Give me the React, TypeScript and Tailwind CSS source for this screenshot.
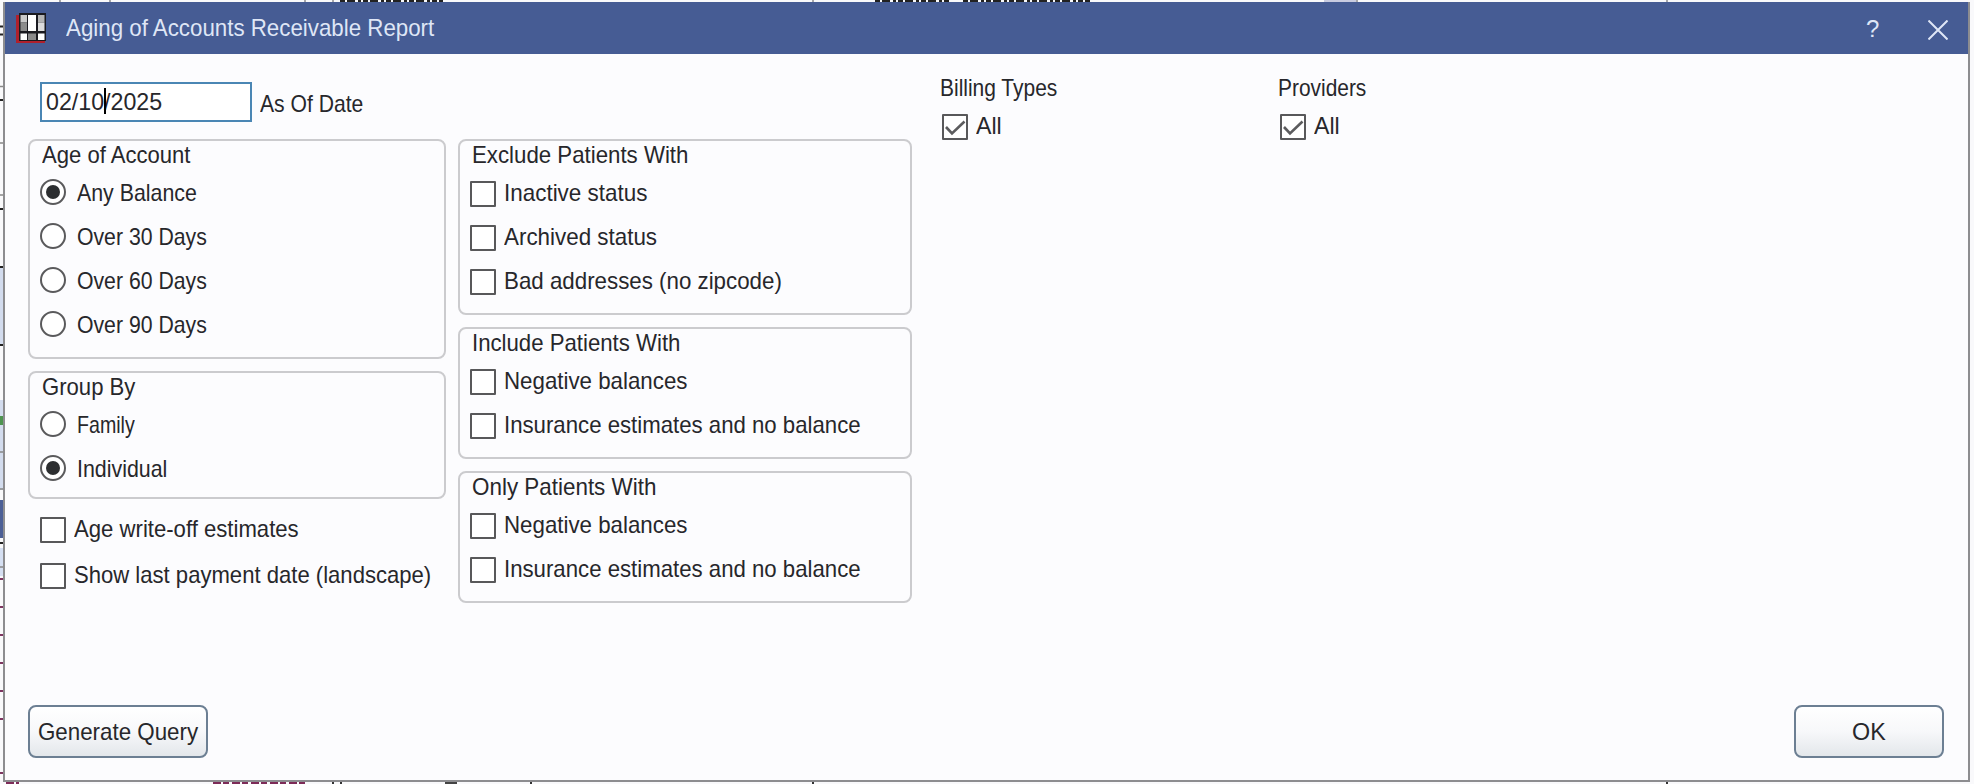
import { useLayoutEffect, useRef, type ReactNode } from "react";

function Label({ text, width, className = "" }: { text: string; width: number; className?: string }) {
  const inner = useRef<HTMLSpanElement>(null);
  useLayoutEffect(() => {
    const el = inner.current;
    if (el) el.style.transform = `scaleX(${width / el.offsetWidth})`;
  }, [text, width]);
  return (
    <span className={`block h-7 shrink-0 whitespace-nowrap ${className}`} style={{ width }}>
      <span ref={inner} className="inline-block origin-left">{text}</span>
    </span>
  );
}

function Radio({ text, width, checked = false }: { text: string; width: number; checked?: boolean }) {
  return (
    <label className="flex h-7 items-center">
      <span className="flex size-[26px] shrink-0 items-center justify-center rounded-full border-2 border-[#5a5a5c] bg-white">
        {checked && <span className="size-3.5 rounded-full bg-[#2c2e30]" />}
      </span>
      <Label text={text} width={width} className="mt-px ml-[11px]" />
    </label>
  );
}

function Check({ text, width, checked = false }: { text: string; width: number; checked?: boolean }) {
  return (
    <label className="flex h-[26px] items-center">
      <span className="flex size-[26px] shrink-0 items-center justify-center rounded-[1px] border-2 border-[#58585a] bg-white">
        {checked && (
          <svg viewBox="0 0 22 22" className="size-[22px]" fill="none" stroke="#5c5c5e" strokeWidth="2.6">
            <path d="M2 11 L8 17.5 L20.5 5.5" />
          </svg>
        )}
      </span>
      <Label text={text} width={width} className="-mt-0.5 ml-2" />
    </label>
  );
}

function Group({ title, width, className, children }: { title: string; width: number; className: string; children: ReactNode }) {
  return (
    <fieldset className={`rounded-lg border-2 border-[#cbcbce] ${className}`}>
      <Label text={title} width={width} className="ml-0.5" />
      {children}
    </fieldset>
  );
}

function Button({ text, width, className }: { text: string; width: number; className: string }) {
  return (
    <button className={`flex h-[53px] items-center justify-center rounded-lg border-2 border-[#6c7f93] bg-linear-to-b from-white via-[#f7f8fa] to-[#e3e7eb] ${className}`}>
      <Label text={text} width={width} className="text-left" />
    </button>
  );
}

function AppIcon() {
  return (
    <svg viewBox="0 0 30 30" className="size-[30px] shrink-0">
      <path d="M0 2h4v24h25v4H0z" fill="#b0202c" />
      <path d="M3 0h27v28H3z" fill="#1a1a20" />
      <path d="M4.500 2h6.500v7.500h-6.500z" fill="#c9c9c9" />
      <path d="M12 2h8v16h-8z" fill="#fff" />
      <path d="M22 2h6.500v7.500h-6.500z" fill="#b4b4b4" />
      <path d="M4.500 9.500h6.500v8.500h-6.500z" fill="#8c8c8c" />
      <path d="M22 9.500h6.500v8.500h-6.500z" fill="#dcdcdc" />
      <path d="M4.500 20.500h6.500v6.500h-6.500zM22 20.500h6.500v6.500h-6.500z" fill="#fff" />
      <path d="M12 20.500h8v6.500h-8z" fill="#8a8a8a" />
    </svg>
  );
}

function Backdrop() {
  return (
    <svg viewBox="0 0 1974 784" className="absolute inset-0 -z-10 h-[784px] w-[1974px]" fill="none">
      <path d="M0 268h3v77h-3zM0 400h3v90h-3z" fill="#d3dcee" />
      <path d="M0 500h3v38h-3z" fill="#4c5f96" />
      <path d="M0 416h3v9h-3z" fill="#4e9450" />
      <path d="M0 548h3v28h-3z" fill="#d5dff2" />
      <path d="M0 26.500h3M0 34.500h3M0 100h3M0 209h3M0 267h3M0 345h3M0 543h3" stroke="#222" strokeWidth="2" />
      <path d="M0 86.500h3M0 143h3M0 195h3M0 452h3M0 489h3M0 567h3" stroke="#888" strokeWidth="1.500" />
      <path d="M0 579h3M0 607h3M0 635h3M0 663h3M0 691h3M0 719h3M0 773h3" stroke="#7d3560" strokeWidth="2" />
      <path d="M60 0v2M110 0v2M305 0v2M333 0v2M813 0v2M1357 0v2M1667 0v2" stroke="#8a8a8e" strokeWidth="1.500" />
      <path d="M1324 0h32v2h-32z" fill="#c8cbe0" />
      <path d="M340 1h103M875 1h76M963 1h127" stroke="#222" strokeWidth="2" strokeDasharray="5 2 8 3 3 2" />
      <path d="M6 783h13M213 783h92" stroke="#7d2b58" strokeWidth="2" strokeDasharray="8 2 6 3" />
      <path d="M333 782v2M341 782v2M531 782v2M813 782v2M1667 782v2" stroke="#333" strokeWidth="2" />
      <path d="M445 783h12" stroke="#444" strokeWidth="2" />
    </svg>
  );
}

export default function App() {
  return (
    <div className="relative isolate h-[784px] w-[1974px] overflow-hidden bg-[#f9f9fb] pt-0.5 pl-[3px] font-['Liberation_Sans',Arial,sans-serif] text-[24px] leading-7 text-[#27272b]">
      <Backdrop />
      <main className="flex h-[780px] w-[1967px] flex-col border-2 border-t-0 border-[#8d8d90] bg-[#fcfcfe]">
        <header className="flex h-[52px] shrink-0 items-center bg-[#465c94] pr-5 pl-[11px] text-[#dfe6f6]">
          <AppIcon />
          <Label text="Aging of Accounts Receivable Report" width={368} className="ml-5" />
          <Label text="?" width={13} className="mt-0.5 ml-auto" />
          <svg viewBox="0 0 20 20" className="mt-[3px] ml-[49px] size-5" stroke="currentColor" strokeWidth="2">
            <path d="M0.5 0.5 L19.5 19.5 M19.5 0.5 L0.5 19.5" />
          </svg>
        </header>

        <div className="flex grow">
          <section className="ml-[23px] w-[418px] pt-7">
            <div className="flex h-10 pl-3">
              <div className="flex h-10 w-[212px] items-center border-2 border-[#4a86b4] bg-white pl-1">
                <div className="relative">
                  <Label text="02/10/2025" width={116} />
                  <span className="absolute top-0 left-[58px] h-[26px] w-0.5 bg-black" />
                </div>
              </div>
              <Label text="As Of Date" width={103} className="mt-2 ml-2" />
            </div>
            <Group title="Age of Account" width={148} className="mt-[17px] h-[220px] pl-2.5">
              <div className="mt-[9px] flex flex-col gap-4">
                <Radio text="Any Balance" width={120} checked />
                <Radio text="Over 30 Days" width={130} />
                <Radio text="Over 60 Days" width={130} />
                <Radio text="Over 90 Days" width={130} />
              </div>
            </Group>
            <Group title="Group By" width={93} className="mt-3 h-[128px] pl-2.5">
              <div className="mt-[9px] flex flex-col gap-4">
                <Radio text="Family" width={58} />
                <Radio text="Individual" width={90} checked />
              </div>
            </Group>
            <div className="mt-[18px] flex flex-col gap-5 pl-3">
              <Check text="Age write-off estimates" width={225} />
              <Check text="Show last payment date (landscape)" width={357} />
            </div>
          </section>

          <section className="ml-3 flex w-[454px] flex-col gap-3 pt-[85px]">
            <Group title="Exclude Patients With" width={216} className="h-[176px] pl-2.5">
              <div className="mt-3 flex flex-col gap-[18px]">
                <Check text="Inactive status" width={143} />
                <Check text="Archived status" width={153} />
                <Check text="Bad addresses (no zipcode)" width={278} />
              </div>
            </Group>
            <Group title="Include Patients With" width={208} className="h-[132px] pl-2.5">
              <div className="mt-3 flex flex-col gap-[18px]">
                <Check text="Negative balances" width={183} />
                <Check text="Insurance estimates and no balance" width={357} />
              </div>
            </Group>
            <Group title="Only Patients With" width={184} className="h-[132px] pl-2.5">
              <div className="mt-3 flex flex-col gap-[18px]">
                <Check text="Negative balances" width={183} />
                <Check text="Insurance estimates and no balance" width={357} />
              </div>
            </Group>
          </section>

          <section className="ml-[30px] w-[338px] pt-5">
            <Label text="Billing Types" width={117} className="-ml-0.5" />
            <div className="mt-3">
              <Check text="All" width={26} checked />
            </div>
          </section>
          <section className="pt-5">
            <Label text="Providers" width={88} className="-ml-0.5" />
            <div className="mt-3">
              <Check text="All" width={26} checked />
            </div>
          </section>
        </div>

        <footer className="flex justify-between pr-6 pb-[22px] pl-[23px]">
          <Button text="Generate Query" width={160} className="w-[180px]" />
          <Button text="OK" width={34} className="w-[150px]" />
        </footer>
      </main>
    </div>
  );
}
